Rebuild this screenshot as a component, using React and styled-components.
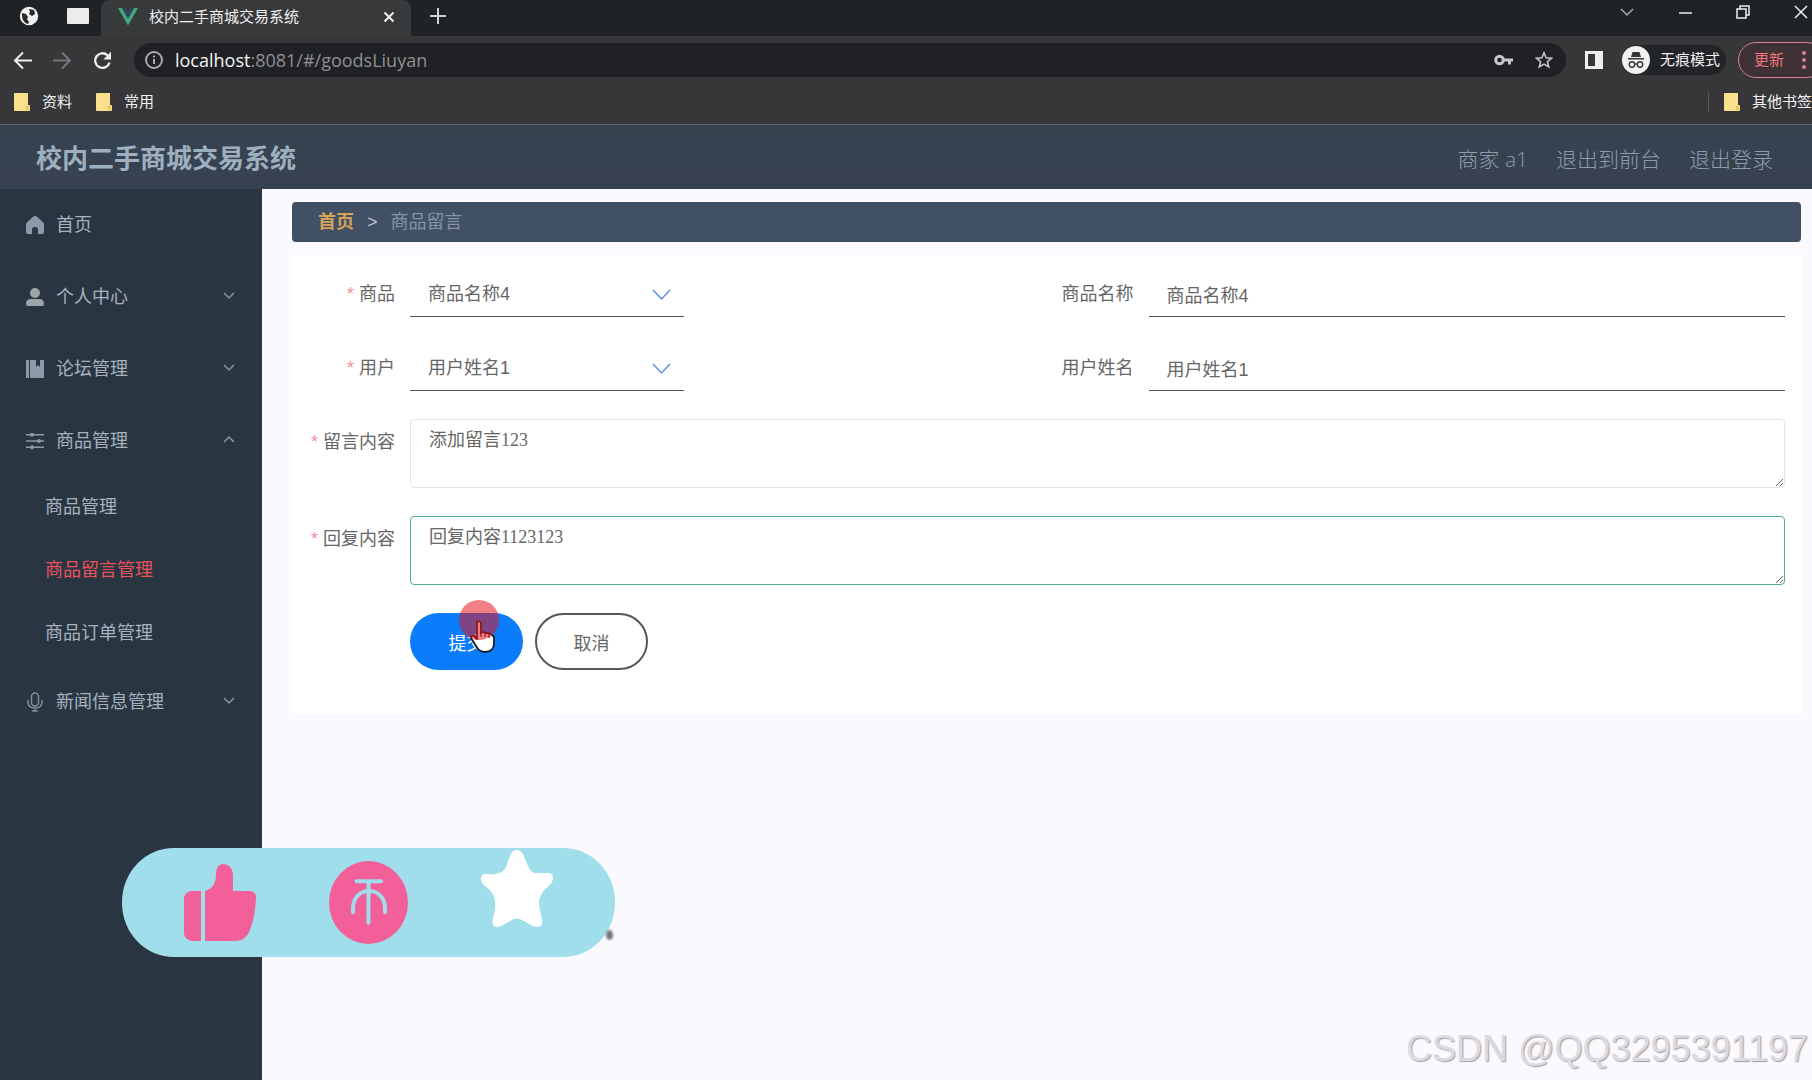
import React, { useEffect, useRef } from "react";
import styled, { createGlobalStyle, css } from "styled-components";

const GlobalStyle = createGlobalStyle`
  *, *::before, *::after { box-sizing: border-box; }
  html, body, #root { height: 100%; }
  body {
    margin: 0;
    overflow: hidden;
    font-family: "Liberation Sans", "Noto Sans CJK SC", sans-serif;
    font-size: 18px;
    background: #faf9fe;
  }
  button, input, select, textarea { font: inherit; color: inherit; margin: 0; }
  a { color: inherit; text-decoration: none; }
`;

const Page = styled.div`
  position: relative;
  display: flex;
  flex-direction: column;
  height: 100vh;
  overflow: hidden;
`;

/* ---------- browser window ---------- */

const Browser = styled.header`
  flex: none;
  background: #37373a;
  color: #f1f1f2;
  font-size: 15px;
  line-height: 24px;
  white-space: nowrap;
  overflow: hidden;
  border-bottom: 1px solid #616970;
`;

const TabStrip = styled.div`
  display: flex;
  height: 36px;
  background: #202326;
`;

const GhostButton = styled.button`
  display: flex;
  flex: none;
  align-items: center;
  justify-content: center;
  width: ${(p) => p.$w || 40}px;
  height: ${(p) => p.$h || 32}px;
  padding: 0;
  border: 0;
  background: none;
  color: ${(p) => p.$color || "#eeeeef"};
`;

const PinnedTabs = styled.div`
  display: flex;
  align-items: center;
  width: 101px;
  height: 32px;
  padding-left: 4px;
`;

const Divider = styled.span`
  width: 1px;
  height: ${(p) => p.$h}px;
  background: #55585c;
`;

const ActiveTab = styled.div`
  display: flex;
  align-items: center;
  gap: 11px;
  width: 310px;
  height: 36px;
  padding: 0 2px 2px 17px;
  border-radius: 8px 8px 0 0;
  background: #37393b;
`;

const TabTitle = styled.span`
  flex: 1;
`;

const WindowControls = styled.div`
  display: flex;
  height: 26px;
  margin-left: auto;
  margin-right: -18px;
`;

const Toolbar = styled.div`
  display: flex;
  align-items: center;
  height: 48px;
  padding-left: 2px;
`;

const Omnibox = styled.div`
  display: flex;
  flex: 1;
  align-items: center;
  gap: 12px;
  height: 34px;
  margin-left: 12px;
  padding: 0 2px 0 11px;
  border-radius: 17px;
  background: #202124;
`;

const Url = styled.div`
  flex: 1;
  color: #8e9093;
  font-family: "Open Sans", "Noto Sans CJK SC", sans-serif;
  font-size: 18px;
  b { font-weight: 400; color: #f4f4f5; }
`;

const OmniActions = styled.div`
  display: flex;
`;

const Incognito = styled.div`
  display: flex;
  align-items: center;
  gap: 10px;
  height: 30px;
  margin-right: 12px;
  padding-right: 6px;
  border-radius: 15px;
  background: #232427;
`;

const UpdateButton = styled.button`
  display: flex;
  align-items: center;
  gap: 18px;
  height: 36px;
  margin-right: -13px;
  padding: 0 18px 0 15px;
  border: 1px solid #d98590;
  border-radius: 18px;
  background: #3f3236;
  color: #f0747c;
`;

const Bookmarks = styled.nav`
  display: flex;
  align-items: center;
  gap: 24px;
  height: 40px;
  padding: 0 0 4px 14px;
`;

const Bookmark = styled.a`
  display: flex;
  align-items: center;
  gap: 12px;
`;

const OtherBookmarks = styled.div`
  display: flex;
  align-items: center;
  gap: 15px;
  margin-left: auto;
`;

/* ---------- application shell ---------- */

const AppHeader = styled.header`
  display: flex;
  flex: none;
  align-items: center;
  justify-content: space-between;
  height: 64px;
  padding: 3px 39px 0 36px;
  background: linear-gradient(#36434f, #384152);
  color: #8c9cac;
`;

const AppTitle = styled.h1`
  margin: 0;
  font-size: 26px;
  line-height: 36px;
  color: #9eafbf;
`;

const HeaderLinks = styled.nav`
  display: flex;
  gap: 28px;
  font-family: "Open Sans", "Noto Sans CJK SC", sans-serif;
  font-size: 21px;
  line-height: 30px;
  font-weight: 300;
`;

const Body = styled.div`
  display: flex;
  flex: 1;
  min-height: 0;
`;

const Sidebar = styled.nav`
  flex: none;
  width: 262px;
  background: #2a3542;
  color: #a6b2be;
`;

const menuRow = css`
  display: flex;
  align-items: center;
  width: 100%;
  border: 0;
  background: none;
  line-height: 26px;
  text-align: left;
`;

const MenuItem = styled.button`
  ${menuRow}
  gap: 11px;
  height: 72px;
  padding: 0 27px 0 25px;
  span { flex: 1; }
`;

const SubItem = styled.a`
  ${menuRow}
  height: 63px;
  padding: 0 0 4px 45px;
  color: ${(p) => (p.$active ? "#e8525c" : "inherit")};
`;

const Main = styled.main`
  flex: 1;
  min-width: 0;
  padding: 13px 11px 0 30px;
`;

const Breadcrumb = styled.nav`
  display: flex;
  align-items: center;
  gap: 13px;
  height: 40px;
  padding: 0 26px;
  border-radius: 4px;
  background: #425066;
  color: #8493a8;
  line-height: 26px;
`;

const CrumbHome = styled.a`
  color: #d6a25a;
  font-weight: 700;
`;

const CrumbArrow = styled.span`
  color: #bcc5cf;
`;

/* ---------- form ---------- */

const Form = styled.form`
  display: grid;
  grid-template-columns: 1fr 1fr;
  row-gap: 28px;
  margin-top: 13px;
  padding: 16px 16px 44px;
  background: #fff;
  color: #666;
`;

const Field = styled.div`
  display: flex;
  grid-column: ${(p) => (p.$wide ? "1 / -1" : "auto")};
`;

const Label = styled.label`
  flex: none;
  width: 102px;
  padding-right: 15px;
  line-height: 46px;
  text-align: right;
  white-space: nowrap;
  &::before {
    content: "${(p) => (p.$required ? "*" : "")}";
    margin-right: 5px;
    color: #f0929c;
  }
`;

const underline = css`
  height: 46px;
  padding: 0 18px;
  border: 0;
  border-bottom: 1px solid #555;
  border-radius: 0;
  outline: 0;
  background: none;
`;

const TextInput = styled.input`
  ${underline}
  flex: 1;
  min-width: 0;
`;

const SelectBox = styled.div`
  position: relative;
  width: 274px;
  svg {
    position: absolute;
    top: 18px;
    right: 13px;
    pointer-events: none;
  }
`;

const Select = styled.select`
  ${underline}
  width: 100%;
  appearance: none;
`;

const TextArea = styled.textarea`
  display: block;
  flex: 1;
  height: 69px;
  padding: 7px 18px;
  border: 1px solid ${(p) => (p.$active ? "#4fae93" : "#e3e4e8")};
  border-radius: 4px;
  outline: 0;
  background: none;
  font-family: "Liberation Serif", "Noto Sans CJK SC", serif;
  line-height: 26px;
  resize: vertical;
`;

const Actions = styled.div`
  display: flex;
  grid-column: 1 / -1;
  gap: 12px;
  padding-left: 102px;
`;

const PillButton = styled.button`
  width: 113px;
  height: 57px;
  padding: 0;
  border: ${(p) => (p.$primary ? "0" : "2px solid #5a5658")};
  border-radius: 29px;
  background: ${(p) => (p.$primary ? "#0a7cfc" : "#fff")};
  color: ${(p) => (p.$primary ? "#fff" : "#666")};
`;

const Clickable = styled.div`
  position: relative;
`;

const Pointer = styled.svg`
  position: absolute;
  left: 49px;
  top: -13px;
  pointer-events: none;
`;

/* ---------- video overlays ---------- */

const LikeBar = styled.div`
  position: absolute;
  left: 122px;
  bottom: 123px;
  display: flex;
  align-items: center;
  width: 493px;
  height: 109px;
  padding: 0 62px;
  justify-content: space-between;
  border-radius: 52px / 54px;
  background: #a0deeb;
`;

const StarLift = styled.span`
  display: flex;
  align-self: flex-start;
  padding-top: 2px;
`;

const Speck = styled.span`
  position: absolute;
  right: 2px;
  bottom: 17px;
  width: 7px;
  height: 10px;
  border-radius: 50%;
  background: #77777c;
  filter: blur(1px);
`;

const Watermark = styled.div`
  position: absolute;
  right: 4px;
  bottom: 9px;
  font-size: 36px;
  line-height: 44px;
  color: #dddbe1;
  text-shadow: 1px 1px 1px #a19fa5;
  white-space: nowrap;
`;

/* ---------- drawings ---------- */

const Globe = () => (
  <svg width="20" height="20" viewBox="0 0 20 20">
    <circle cx="10" cy="10" r="9.2" fill="#f0f0f0" />
    <path d="M3 7l4 1 2 3-1 2 2 3-1 2c-4-1-6.500-5-6-11zM10 3l5 1 1 4-3 2-3-2 1-2z" fill="#27292b" />
  </svg>
);
const Vue = () => (
  <svg width="20" height="18" viewBox="0 0 20 18">
    <path d="M0 0h4l6 10.500L16 0h4L10 17.500z" fill="#41a883" />
    <path d="M4 0h3.800L10 4l2.200-4H16l-6 10.500z" fill="#34495e" />
  </svg>
);
const Stroke = ({ w = 18, h = w, box, d, sw = 2, ...rest }) => (
  <svg width={w} height={h} viewBox={box || `0 0 ${w} ${h}`} fill="none" stroke="currentColor" strokeWidth={sw} {...rest}>
    <path d={d} />
  </svg>
);
const Folder = () => (
  <svg width="16" height="18" viewBox="0 0 16 18">
    <path d="M0 1q0-1 1-1h13v12h1q1 0 1 1v4q0 1-1 1H1q-1 0-1-1z" fill="#f8e08c" />
    <path d="M12 13h3v4h-3z" fill="#e8c95e" />
  </svg>
);
const Chevron = ({ up }) => <Stroke w={12} h={12} d={up ? "M1 7l5-5 5 5" : "M1 2l5 5 5-5"} sw={1.500} color="#8794a1" />;

const icons = {
  home: <path d="M10 1q1 0 2 .8l6 5.500q1 1 1 2.200V17q0 2-2 2h-4v-5q0-2-3-2t-3 2v5H3q-2 0-2-2V9.500q0-1.200 1-2.200l6-5.500Q9 1 10 1z" fill="#8c99a8" />,
  user: (
    <g fill="#9ca6a9">
      <circle cx="10" cy="6" r="5" />
      <path d="M1 17q0-5 5-5h8q5 0 5 5 0 2-2 2H3q-2 0-2-2z" />
    </g>
  ),
  book: <path d="M1 1h3v18H1zM5 1h6v7l2-2 2 2V1h4v18H5z" fill="#8c99a8" />,
  sliders: (
    <g fill="#8c99a8">
      <path d="M1 3h18v1.500H1zM1 9.300h18v1.500H1zM1 15.500h18V17H1z" />
      <circle cx="7" cy="3.700" r="2" />
      <circle cx="14" cy="10" r="2" />
      <circle cx="7" cy="16.200" r="2" />
    </g>
  ),
  mic: (
    <g fill="none" stroke="#7f8d9b" strokeWidth="1.500">
      <rect x="6.500" y="1" width="7" height="13" rx="3.500" />
      <path d="M3 8v2q0 6 7 6t7-6V8M10 16v3M7 19h6" />
    </g>
  ),
};
const MenuIcon = ({ name }) => (
  <svg width="20" height="20" viewBox="0 0 20 20">{icons[name]}</svg>
);

const Thumb = () => (
  <svg width="72" height="77" viewBox="0 0 72 80" preserveAspectRatio="none" fill="#f35f98">
    <path d="M8 28h9v52H8q-8-1-8-9V36q0-7 8-8z" />
    <path d="M21 28q11-3 11-17Q32 0 39 0q9 0 10 11v17h16q7 0 7 7-1 21-6 33-4 12-14 12H21z" />
  </svg>
);
const Coin = () => (
  <svg width="79" height="83" viewBox="0 0 79 86" preserveAspectRatio="none">
    <ellipse cx="39.500" cy="43" rx="39.500" ry="43" fill="#f35f98" />
    <path d="M27.500 21h24.500M39.500 21v43M24 53V49C24 25 56 25 56 49v4" fill="none" stroke="#a0deeb" strokeWidth="4" strokeLinecap="round" />
  </svg>
);
const Star = () => (
  <svg width="72" height="77" viewBox="0 0 72 80" preserveAspectRatio="none">
    <path d="M36 0q5 0 7 7l5 12q2 5 7 5h12q5 0 5 5 0 5-5 9-8 7-9 15 0 8 3 19 1 8-5 8-4 0-8-3-7-5-12-6-5 1-12 6-4 3-8 3-6 0-4-9 3-10 2-18-1-8-8-14-7-5-6-10 1-5 6-4 7 1 12-1 6-2 8-9l3-9q2-6 7-6z" fill="#fff" />
  </svg>
);

/* ---------- page ---------- */

const menuTop = [
  { icon: "home", text: "首页" },
  { icon: "user", text: "个人中心", arrow: "down" },
  { icon: "book", text: "论坛管理", arrow: "down" },
  { icon: "sliders", text: "商品管理", arrow: "up", children: ["商品管理", "商品留言管理", "商品订单管理"] },
  { icon: "mic", text: "新闻信息管理", arrow: "down" },
];

function BrowserChrome() {
  return (
    <Browser>
      <TabStrip>
        <PinnedTabs>
          <GhostButton $w={50} aria-label="Globe"><Globe /></GhostButton>
          <Divider $h={28} />
          <GhostButton $w={48} aria-label="Window">
            <svg width="22" height="16"><rect width="22" height="16" rx="1" fill="#ececec" /></svg>
          </GhostButton>
        </PinnedTabs>
        <ActiveTab>
          <Vue />
          <TabTitle>校内二手商城交易系统</TabTitle>
          <GhostButton aria-label="Close tab"><Stroke w={12} d="M1.500 1.500l9 9M10.500 1.500l-9 9" /></GhostButton>
        </ActiveTab>
        <GhostButton $w={53} aria-label="New tab"><Stroke w={16} d="M8 0v16M0 8h16" color="#d0d1d2" /></GhostButton>
        <WindowControls>
          <GhostButton $w={58} $h={24} $color="#a3a5a8" aria-label="Search tabs"><Stroke w={14} h={9} d="M1 1l6 6 6-6" sw={1.500} /></GhostButton>
          <GhostButton $w={58} $h={26} aria-label="Minimize"><Stroke w={13} h={2} d="M0 1h13" sw={1.500} /></GhostButton>
          <GhostButton $w={58} $h={24} aria-label="Restore"><Stroke w={14} d="M1 4h9v9H1zM4 4V1h9v9h-3" sw={1.500} /></GhostButton>
          <GhostButton $w={58} $h={24} aria-label="Close"><Stroke w={14} d="M1 1l12 12M13 1L1 13" sw={1.500} /></GhostButton>
        </WindowControls>
      </TabStrip>
      <Toolbar>
        <GhostButton aria-label="Back"><Stroke w={19} d="M19 9.500H2M10 1.500l-8 8 8 8" /></GhostButton>
        <GhostButton $color="#77787b" aria-label="Forward"><Stroke w={19} d="M0 9.500h17M9 1.500l8 8-8 8" /></GhostButton>
        <GhostButton aria-label="Reload">
          <svg width="19" height="19" viewBox="0 0 19 19">
            <path d="M16.500 11.500A7.300 7.300 0 1 1 14.500 4.300" fill="none" stroke="currentColor" strokeWidth="2.400" />
            <path d="M18 .8v7.700h-7.700z" fill="currentColor" />
          </svg>
        </GhostButton>
        <Omnibox>
          <svg width="18" height="18" viewBox="0 0 18 18" fill="none" stroke="#a9abad" strokeWidth="2">
            <circle cx="9" cy="9" r="8" />
            <path d="M9 8v5M9 4.500v2" />
          </svg>
          <Url><b>localhost</b>:8081/#/goodsLiuyan</Url>
          <OmniActions>
            <GhostButton $color="#c6c7c9" aria-label="Password">
              <svg width="19" height="12" viewBox="0 0 19 12" fill="none" stroke="currentColor">
                <circle cx="5.500" cy="6" r="3.800" strokeWidth="3" />
                <path d="M10 6h9M15.500 6v4.500" strokeWidth="3" />
              </svg>
            </GhostButton>
            <GhostButton $color="#c6c7c9" aria-label="Bookmark page">
              <Stroke w={18} box="0 0 18 18" d="M9 1.800l2.100 4.900 5.400.5-4.100 3.500 1.300 5.200L9 13.100l-4.700 2.800 1.300-5.200L1.500 7.200l5.400-.5z" sw={1.600} />
            </GhostButton>
          </OmniActions>
        </Omnibox>
        <GhostButton $w={56} aria-label="Side panel">
          <svg width="18" height="18" viewBox="0 0 18 18"><path d="M0 0h18v18H0zM3 3v12h7V3z" fillRule="evenodd" fill="#efeff0" /></svg>
        </GhostButton>
        <Incognito>
          <svg width="28" height="28" viewBox="0 0 28 28">
            <circle cx="14" cy="14" r="14" fill="#f1f1f2" />
            <path d="M9 11l1.500-5h7L19 11zM6 12h16v1.500H6z" fill="#333538" />
            <g fill="none" stroke="#333538" strokeWidth="1.400">
              <circle cx="10" cy="18.500" r="2.700" />
              <circle cx="18" cy="18.500" r="2.700" />
              <path d="M12.700 18h2.600" />
            </g>
          </svg>
          无痕模式
        </Incognito>
        <UpdateButton>
          更新
          <svg width="4" height="18" viewBox="0 0 4 18" fill="#d98590">
            <circle cx="2" cy="2" r="2" /><circle cx="2" cy="9" r="2" /><circle cx="2" cy="16" r="2" />
          </svg>
        </UpdateButton>
      </Toolbar>
      <Bookmarks>
        <Bookmark href="#"><Folder />资料</Bookmark>
        <Bookmark href="#"><Folder />常用</Bookmark>
        <OtherBookmarks>
          <Divider $h={20} />
          <Bookmark href="#"><Folder />其他书签</Bookmark>
        </OtherBookmarks>
      </Bookmarks>
    </Browser>
  );
}

function SelectField({ id, label, value }) {
  return (
    <Field>
      <Label htmlFor={id} $required>{label}</Label>
      <SelectBox>
        <Select id={id} defaultValue={value}><option>{value}</option></Select>
        <Stroke w={19} h={12} d="M1 1l8.500 9L18 1" sw={1.500} color="#5d8fe0" />
      </SelectBox>
    </Field>
  );
}

function TextField({ id, label, value }) {
  return (
    <Field>
      <Label htmlFor={id}>{label}</Label>
      <TextInput id={id} defaultValue={value} />
    </Field>
  );
}

export default function App() {
  const reply = useRef(null);
  useEffect(() => {
    const el = reply.current;
    el.focus();
    el.setSelectionRange(el.value.length, el.value.length);
  }, []);

  return (
    <>
      <GlobalStyle />
      <Page>
        <BrowserChrome />
        <AppHeader>
          <AppTitle>校内二手商城交易系统</AppTitle>
          <HeaderLinks>
            <span>商家 a1</span>
            <a href="#">退出到前台</a>
            <a href="#">退出登录</a>
          </HeaderLinks>
        </AppHeader>
        <Body>
          <Sidebar>
            {menuTop.map((m) => (
              <React.Fragment key={m.text}>
                <MenuItem>
                  <MenuIcon name={m.icon} />
                  <span>{m.text}</span>
                  {m.arrow && <Chevron up={m.arrow === "up"} />}
                </MenuItem>
                {m.children?.map((c) => (
                  <SubItem key={c} href="#" $active={c === "商品留言管理"}>{c}</SubItem>
                ))}
              </React.Fragment>
            ))}
          </Sidebar>
          <Main>
            <Breadcrumb>
              <CrumbHome href="#">首页</CrumbHome>
              <CrumbArrow>&gt;</CrumbArrow>
              <span>商品留言</span>
            </Breadcrumb>
            <Form onSubmit={(e) => e.preventDefault()}>
              <SelectField id="goods" label="商品" value="商品名称4" />
              <TextField id="goodsName" label="商品名称" value="商品名称4" />
              <SelectField id="user" label="用户" value="用户姓名1" />
              <TextField id="userName" label="用户姓名" value="用户姓名1" />
              <Field $wide>
                <Label htmlFor="message" $required>留言内容</Label>
                <TextArea id="message" defaultValue="添加留言123" />
              </Field>
              <Field $wide>
                <Label htmlFor="reply" $required>回复内容</Label>
                <TextArea id="reply" ref={reply} $active defaultValue="回复内容1123123" />
              </Field>
              <Actions>
                <Clickable>
                  <PillButton type="submit" $primary>提交</PillButton>
                  <Pointer width="40" height="54" viewBox="0 0 40 54">
                    <path d="M18 22q2-2 4 1v10l2-1 3 1 3 0 3 2 2 2v6q0 9-9 9-6 0-9-6l-5-8q0-3 3-2l3 3z" fill="#fff" stroke="#1b1b22" strokeWidth="1.800" strokeLinejoin="round" />
                    <path d="M22 32v5M26 33v4M30 34v4" stroke="#1b1b22" strokeWidth="1.200" />
                    <circle cx="20" cy="20" r="20" fill="#e6141e" fillOpacity=".54" />
                  </Pointer>
                </Clickable>
                <PillButton type="button">取消</PillButton>
              </Actions>
            </Form>
          </Main>
        </Body>
        <LikeBar>
          <Thumb />
          <Coin />
          <StarLift><Star /></StarLift>
          <Speck />
        </LikeBar>
        <Watermark>CSDN @QQ3295391197</Watermark>
      </Page>
    </>
  );
}
